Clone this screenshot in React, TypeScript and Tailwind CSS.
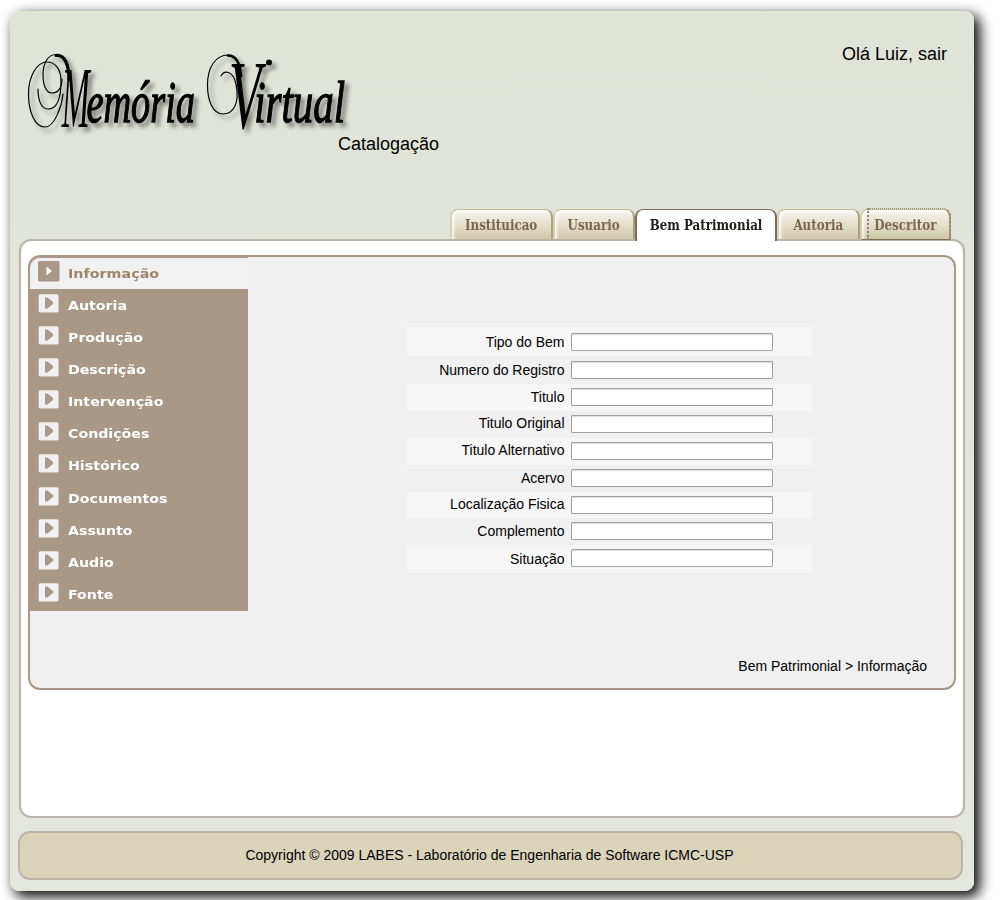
const menu = [
  'Autoria',
  'Produção',
  'Descrição',
  'Intervenção',
  'Condições',
  'Histórico',
  'Documentos',
  'Assunto',
  'Audio',
  'Fonte',
];

const fields = [
  { label: 'Tipo do Bem', row: 'h-[29px] bg-[#f6f6f6]', text: 'pt-[5px]', input: 'mt-[6px]' },
  { label: 'Numero do Registro', row: 'h-[28px]', text: 'pt-[4px]', input: 'mt-[5px]' },
  { label: 'Titulo', row: 'h-[27px] bg-[#f6f6f6]', text: 'pt-[3px]', input: 'mt-[4px]' },
  { label: 'Titulo Original', row: 'h-[27px]', text: 'pt-[2px]', input: 'mt-[4px]' },
  { label: 'Titulo Alternativo', row: 'h-[27px] bg-[#f6f6f6]', text: 'pt-[2px]', input: 'mt-[4px]' },
  { label: 'Acervo', row: 'h-[27px]', text: 'pt-[3px]', input: 'mt-[4px]' },
  { label: 'Localização Fisica', row: 'h-[26px] bg-[#f6f6f6]', text: 'pt-[2px]', input: 'mt-[4px]' },
  { label: 'Complemento', row: 'h-[27px]', text: 'pt-[3px]', input: 'mt-[4px]' },
  { label: 'Situação', row: 'h-[28px] bg-[#f6f6f6]', text: 'pt-[4px]', input: 'mt-[4px]' },
];

function Logo() {
  return (
    <svg
      width="340"
      height="100"
      viewBox="20 45 340 100"
      className="block overflow-visible drop-shadow-[4px_4px_2px_rgba(0,0,0,0.45)]"
    >
      <g fill="none" stroke="#000" strokeLinecap="round">
        <path strokeWidth="1.2" d="M63 94C62 105 55 127 45 127C34 127 28.5 110 28.5 94C28.5 76 37 62 47 62C56 62 61 70 61 81C61 98 58 109 48 109C41 109 38 100 38 89" />
        <path strokeWidth="1.2" d="M62 79C62 88 58 93 52 93C46 93 43 85 43 75C43 63 48 54.5 56 54.5" />
        <path strokeWidth="3.2" d="M56 55.5C65 54.5 69 65 69 80" />
        <path strokeWidth="1.2" d="M221 76C224 70 233 70 236 84C240 104 233 114 223 114C213 114 207.5 101 207.5 85C207.5 67 216 55 228 55" />
        <path strokeWidth="2.6" d="M228 55.5C236 55.5 240 62 241 76" />
      </g>
      <circle cx="269" cy="62.5" r="3" />
      <g transform="scale(0.65 1)" fontFamily="Liberation Serif" fontStyle="italic" fontSize="60">
        <text>
          <tspan x="95" y="127" fontSize="86" textLength="43" lengthAdjust="spacingAndGlyphs">M</tspan>
          <tspan x="133" y="122" stroke="#000" strokeWidth="1.3" textLength="167" lengthAdjust="spacingAndGlyphs">emória</tspan>
        </text>
        <text>
          <tspan x="352" y="128" fontSize="98" textLength="50" lengthAdjust="spacingAndGlyphs">V</tspan>
          <tspan x="391" y="122" stroke="#000" strokeWidth="1.3" textLength="140" lengthAdjust="spacingAndGlyphs">irtual</tspan>
        </text>
      </g>
    </svg>
  );
}

function Arrow({ active = false }: { active?: boolean }) {
  return active ? (
    <svg width="22" height="21" viewBox="0 0 22 21" className="block">
      <rect width="21.5" height="20.5" rx="1.5" fill="#a89885" />
      <path d="M8.5 5.5L14 10L8.5 14.5Z" fill="#fff" />
    </svg>
  ) : (
    <svg width="22" height="21" viewBox="0 0 22 21" className="block">
      <rect x="0.7" y="1.2" width="19.8" height="18.3" rx="1.5" fill="#f1f1f2" />
      <path d="M7 4.5H9.5L15 9V11L9.5 15.5H7Z" fill="#a89885" />
    </svg>
  );
}

const idle =
  'h-[31px] rounded-t-[8px] border-x-2 border-y border-t-[#c3ba90] border-r-[#aaa17b] border-b-[#7f6b58] border-l-[#d6d1b5] bg-linear-to-b from-[#f6f5ed] via-[#e4e0cc] to-[#cec7a8] text-[#7b6750] shadow-[inset_2px_2px_3px_rgba(255,255,255,0.9)]';

export default function App() {
  return (
    <div className="h-[900px] w-[1000px] overflow-hidden bg-white pl-[10px] pt-[11px] font-['Liberation_Sans',sans-serif] text-black">
      <div className="flex h-[880px] w-[964px] flex-col rounded-[9px] bg-linear-to-b from-[#e0e3d8] to-[#e4e7de] shadow-[5px_5px_13px_1px_rgba(0,0,0,0.95)]">
        <header className="flex h-[197px] justify-between pl-[10px] pr-[27px]">
          <div className="pt-[34px]">
            <Logo />
            <p className="-mt-[11px] ml-[318px] w-[120px] text-[18px] leading-5">Catalogação</p>
          </div>
          <p className="pt-[33px] text-[18px] leading-5">Olá Luiz, sair</p>
        </header>
        <nav className="flex h-8 w-[941px] justify-end whitespace-nowrap pt-px text-center font-['DejaVu_Serif_Condensed','DejaVu_Serif',serif] text-[15px] font-bold leading-[30px]">
          <div className={`${idle} w-[103px]`}>
            <span className="-mx-4 inline-block scale-x-[0.88]">Instituicao</span>
          </div>
          <div className={`${idle} w-[82px]`}>
            <span className="-mx-4 inline-block scale-x-[0.88]">Usuario</span>
          </div>
          <div className="relative h-8 w-[142px] rounded-t-[8px] border-x-2 border-t border-[#806c5e] bg-white text-[#20201e]">
            <span className="-mx-4 inline-block scale-x-[0.88]">Bem Patrimonial</span>
          </div>
          <div className={`${idle} w-[83px]`}>
            <span className="-mx-4 inline-block scale-x-[0.88]">Autoria</span>
          </div>
          <div className={`${idle} relative w-[91px]`}>
            <span className="-mx-4 inline-block scale-x-[0.88]">Descritor</span>
            <i className="absolute -right-[2px] -top-[2px] left-[5px] h-8 rounded-tr-[8px] border-l-2 border-r-2 border-t border-dotted border-[#91846a]" />
          </div>
        </nav>
        <main className="-mt-px ml-[9px] h-[579px] w-[946px] rounded-xl border-2 border-[#bdb3a9] bg-white pl-[7px] pt-[14px]">
          <section className="flex h-[435px] w-[928px] overflow-hidden rounded-xl border-2 border-[#a89885] bg-[#f0f0f0]">
            <aside className="h-[354px] w-[218px] shrink-0 bg-[#a89885] font-['DejaVu_Sans',sans-serif] text-[13px] font-bold text-white">
              <div className="mt-px flex h-[31px] rounded-tl-[10px] bg-[#f1f1f2] pl-2 pt-[3px] text-[#a08467]">
                <Arrow active />
                <span className="ml-2 origin-left scale-x-[1.1] leading-[25px]">Informação</span>
              </div>
              {menu.map((item) => (
                <div key={item} className="flex h-[32.1px] pl-2 pt-[4px]">
                  <Arrow />
                  <span className="ml-2 origin-left scale-x-[1.09] leading-[25px]">{item}</span>
                </div>
              ))}
            </aside>
            <div className="flex-1 pl-[159px] pt-[70px]">
              <form className="w-[405px] text-[14px] leading-5">
                {fields.map((f) => (
                  <div key={f.label} className={`flex ${f.row}`}>
                    <label className={`mr-[6.5px] w-[157.5px] text-right ${f.text}`}>{f.label}</label>
                    <input
                      aria-label={f.label}
                      className={`h-[18px] w-[202px] rounded-[1px] border border-[#a0a0a0] bg-white shadow-[inset_0_1px_1px_#dddddd] ${f.input}`}
                    />
                  </div>
                ))}
              </form>
              <p className="mr-[27px] mt-[83px] text-right text-[14px] leading-5">Bem Patrimonial &gt; Informação</p>
            </div>
          </section>
        </main>
        <footer className="ml-2 mt-[13px] h-[49px] w-[945px] rounded-xl border-2 border-[#bdb3a9] bg-[#d9d4ba] pr-[2px] text-center text-[14px] leading-[45px]">
          Copyright © 2009 LABES - Laboratório de Engenharia de Software ICMC-USP
        </footer>
      </div>
    </div>
  );
}
